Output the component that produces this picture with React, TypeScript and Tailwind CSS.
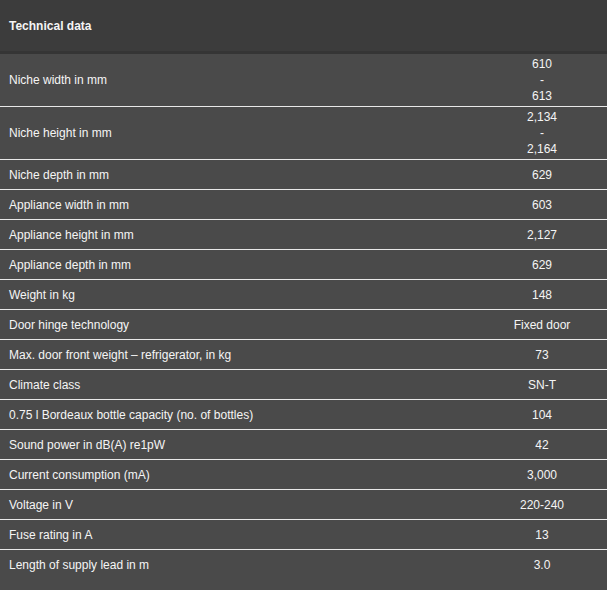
const rows: [string, string[]][] = [
  ["Niche width in mm", ["610", "-", "613"]],
  ["Niche height in mm", ["2,134", "-", "2,164"]],
  ["Niche depth in mm", ["629"]],
  ["Appliance width in mm", ["603"]],
  ["Appliance height in mm", ["2,127"]],
  ["Appliance depth in mm", ["629"]],
  ["Weight in kg", ["148"]],
  ["Door hinge technology", ["Fixed door"]],
  ["Max. door front weight – refrigerator, in kg", ["73"]],
  ["Climate class", ["SN-T"]],
  ["0.75 l Bordeaux bottle capacity (no. of bottles)", ["104"]],
  ["Sound power in dB(A) re1pW", ["42"]],
  ["Current consumption (mA)", ["3,000"]],
  ["Voltage in V", ["220-240"]],
  ["Fuse rating in A", ["13"]],
  ["Length of supply lead in m", ["3.0"]],
];

export default function App() {
  return (
    <div className="w-[607px] min-h-[590px] bg-[#4a4a4a] text-[12px] text-[#f5f5f5] font-['Liberation_Sans',Arial,sans-serif]">
      <div className="h-[54px] bg-[#3c3c3c] border-b-[3px] border-[#353535] flex items-center pl-[9px]">
        <span className="font-bold">Technical data</span>
      </div>
      {rows.map(([label, values], i) => (
        <div
          key={label}
          className={
            "grid grid-cols-[1fr_130px] items-center " +
            (values.length > 1 ? "h-[53px] " : "h-[30px] ") +
            (i < rows.length - 1 ? "border-b border-[#e8e8e8]" : "")
          }
        >
          <div className="pl-[9px] leading-4">{label}</div>
          <div className="flex flex-col items-center leading-4">
            {values.map((v, j) => (
              <span key={j}>{v}</span>
            ))}
          </div>
        </div>
      ))}
    </div>
  );
}
